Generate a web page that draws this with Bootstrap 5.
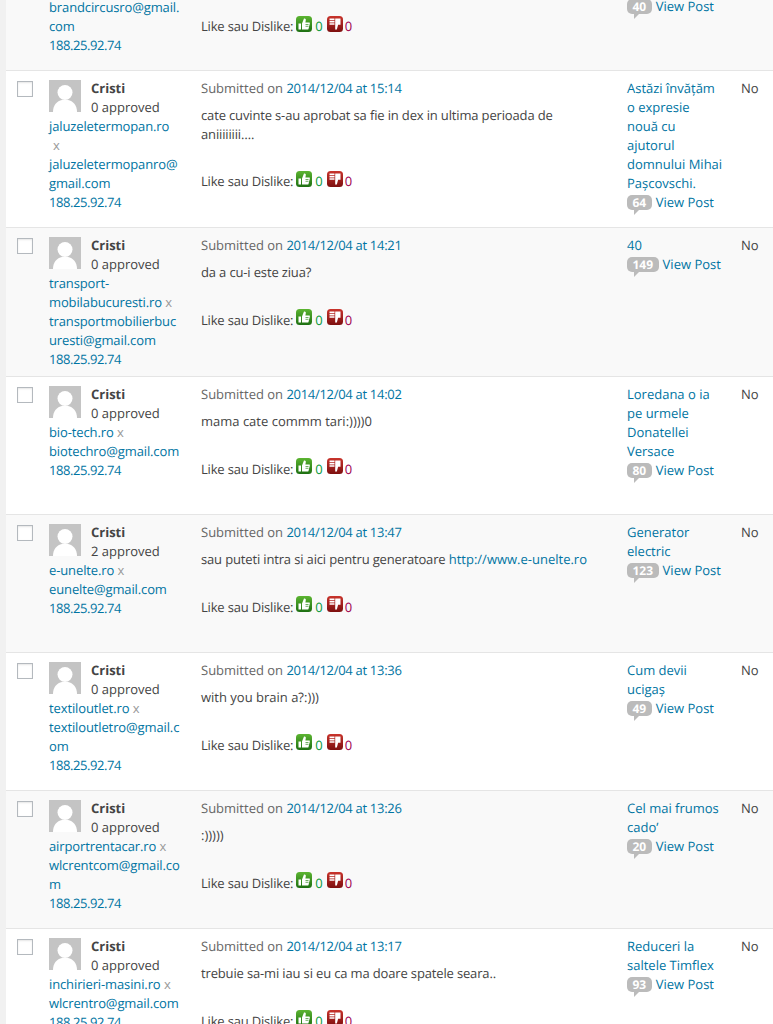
<!doctype html>
<html lang="ro"><head><meta charset="utf-8">
<link href="https://cdn.jsdelivr.net/npm/bootstrap@5.3.0/dist/css/bootstrap.min.css" rel="stylesheet">
<style>
html,body{margin:0;background:#f1f1f1;height:1024px;overflow:hidden}
body{font-family:"Open Sans","Noto Sans",sans-serif;font-size:13px;line-height:19px;color:#444;text-rendering:geometricPrecision}
a{color:#0074a2;text-decoration:none}
.wrapc{margin-left:6px;background:#fff}
.crow{border-bottom:1px solid #e5e5e5;background:#fff;min-height:138px}
.crow.alt{background:#f9f9f9}
.crow-cut{min-height:0;height:71px;overflow:hidden}
.cchk{width:43px;flex:none;padding:10px 0 0 11px}
.cbox{display:block;width:16px;height:16px;border:1px solid #b4b9be;background:#fff;box-shadow:inset 0 1px 2px rgba(0,0,0,.1)}
.cauth{width:152px;flex:none;padding:8px 10px 7px 0}
.cauth>a{letter-spacing:-.12px}
.cauth>a.cip{letter-spacing:-.43px}
.crow-cut .cauth{padding-top:0;margin-top:-2px}
.ahead{display:flex;height:38px}
.avat{width:32px;height:32px;flex:none;margin:1px 10px 0 0;display:block}
.aname{font-weight:700;display:block}
.ax{color:#999}
.ax-own{margin-left:4px}
.cbody{width:426px;flex:none;padding:8px 10px 0 0}
.crow-cut .cbody{padding-top:17px}
.csub{color:#666;margin-bottom:8px}
.csub a{letter-spacing:-.3px}
.ctext{margin:0;line-height:18.5px}
.ctext-tight{letter-spacing:-.15px}
.ctext-tight a{letter-spacing:0}
.clike{margin-top:29px;display:flex;align-items:center;height:19px}
.clabel{letter-spacing:-.18px}
.crow-cut .clike{margin-top:0}
.ticon{display:block;width:16px;height:16px;margin:0 3px;position:relative;top:-3px}
.ticon-down{margin-left:4px;margin-right:2px}
.cg{color:#0a9a3c}.cr{color:#a00050}
.cpost{width:114px;flex:none;padding:8px 0 15px}
.crow-cut .cpost{padding:0;margin-top:-3px}
.cno{flex:1;padding:8px 0 0}
.bub{display:inline-block;position:relative;background:#bbb;color:#fff;font-weight:700;font-size:12px;line-height:15px;height:15px;padding:0 5.5px;border-radius:5px;margin:2px 4px 0 0}
.bub::after{content:"";position:absolute;left:7px;top:15px;border-style:solid;border-width:5px 5px 0 0;border-color:#bbb transparent transparent transparent}
</style></head><body>
<svg width="0" height="0" class="position-absolute"><defs>
<linearGradient id="gg" x1="0" y1="0" x2="0" y2="1"><stop offset="0" stop-color="#5cb531"/><stop offset="1" stop-color="#1d6f12"/></linearGradient>
<linearGradient id="rg" x1="0" y1="0" x2="0" y2="1"><stop offset="0" stop-color="#c9342c"/><stop offset="1" stop-color="#7d0f0f"/></linearGradient>
<symbol id="up" viewBox="0 0 16 16"><rect width="16" height="16" rx="3.5" fill="url(#gg)"/><path d="M2.500 7.500h2.500v6H2.500zM6 7.500 8 2.500c1.300-.4 2 .5 1.800 1.700L9.400 6.500H13c.8 0 1 .6.800 1.200l-1.300 5.300c-.1.400-.4.600-.9.600H6z" fill="#fff"/><path d="M9.500 8.500h3M9.500 10.300h3" stroke="#2f8a1c" stroke-width=".7"/></symbol>
<symbol id="down" viewBox="0 0 16 16"><rect width="16" height="16" rx="3.500" fill="url(#rg)"/><path d="M2.500 2.500h5v1.800h-5zM2.500 5h5v1.600h-5zM2.500 7.300h5v1.500h-5zM8.200 2.500h5.300v6.300h-2.400l-1.100 4.200c-.3.800-1 1-1.600.6-.3-.8-.3-1.600-.2-2.500l0-2.300z" fill="#fff"/></symbol>
<symbol id="av" viewBox="0 0 32 32"><rect width="32" height="32" fill="#c4c4c4"/><circle cx="16" cy="12.500" r="7.500" fill="#fff"/><path d="M4 32c0-7 4-11 9-12h6c5 1 9 5 9 12z" fill="#fff"/></symbol>
</defs></svg>
<div class="wrapc">

<div class="crow crow-cut alt d-flex">
<div class="cchk"></div>
<div class="cauth"><a href="#">brandcircusro@gmail.<br>com</a><br><a class="cip" href="#">188.25.92.74</a></div>
<div class="cbody"><div class="clike"><span class="clabel">Like sau Dislike:</span><svg class="ticon"><use href="#up"/></svg><span class="cg">0</span><svg class="ticon ticon-down"><use href="#down"/></svg><span class="cr">0</span></div></div>
<div class="cpost"><div class="d-flex"><span class="bub">40</span><a href="#">View Post</a></div></div>
</div>

<div class="crow d-flex">
<div class="cchk"><span class="cbox"></span></div>
<div class="cauth"><div class="ahead"><svg class="avat"><use href="#av"/></svg><div><span class="aname">Cristi</span>0 approved</div></div><a href="#">jaluzeletermopan.ro</a><br><span class="ax ax-own">x</span><br><a href="#">jaluzeletermopanro@<br>gmail.com</a><br><a class="cip" href="#">188.25.92.74</a></div>
<div class="cbody"><div class="csub">Submitted on <a href="#">2014/12/04 at 15:14</a></div><p class="ctext ctext-tight">cate cuvinte s-au aprobat sa fie in dex in ultima perioada de<br>aniiiiiiii….</p><div class="clike"><span class="clabel">Like sau Dislike:</span><svg class="ticon"><use href="#up"/></svg><span class="cg">0</span><svg class="ticon ticon-down"><use href="#down"/></svg><span class="cr">0</span></div></div>
<div class="cpost"><a href="#">Astăzi învățăm<br>o expresie<br>nouă cu<br>ajutorul<br>domnului Mihai<br>Pașcovschi.</a><div class="d-flex"><span class="bub">64</span><a href="#">View Post</a></div></div>
<div class="cno">No</div>
</div>

<div class="crow alt d-flex">
<div class="cchk"><span class="cbox"></span></div>
<div class="cauth"><div class="ahead"><svg class="avat"><use href="#av"/></svg><div><span class="aname">Cristi</span>0 approved</div></div><a href="#">transport-<br>mobilabucuresti.ro</a> <span class="ax">x</span><br><a href="#">transportmobilierbuc<br>uresti@gmail.com</a><br><a class="cip" href="#">188.25.92.74</a></div>
<div class="cbody"><div class="csub">Submitted on <a href="#">2014/12/04 at 14:21</a></div><p class="ctext ctext-tight">da a cu-i este ziua?</p><div class="clike"><span class="clabel">Like sau Dislike:</span><svg class="ticon"><use href="#up"/></svg><span class="cg">0</span><svg class="ticon ticon-down"><use href="#down"/></svg><span class="cr">0</span></div></div>
<div class="cpost"><a href="#">40</a><div class="d-flex"><span class="bub">149</span><a href="#">View Post</a></div></div>
<div class="cno">No</div>
</div>

<div class="crow d-flex">
<div class="cchk"><span class="cbox"></span></div>
<div class="cauth"><div class="ahead"><svg class="avat"><use href="#av"/></svg><div><span class="aname">Cristi</span>0 approved</div></div><a href="#">bio-tech.ro</a> <span class="ax">x</span><br><a href="#">biotechro@gmail.com</a><br><a class="cip" href="#">188.25.92.74</a></div>
<div class="cbody"><div class="csub">Submitted on <a href="#">2014/12/04 at 14:02</a></div><p class="ctext">mama cate commm tari:))))0</p><div class="clike"><span class="clabel">Like sau Dislike:</span><svg class="ticon"><use href="#up"/></svg><span class="cg">0</span><svg class="ticon ticon-down"><use href="#down"/></svg><span class="cr">0</span></div></div>
<div class="cpost"><a href="#">Loredana o ia<br>pe urmele<br>Donatellei<br>Versace</a><div class="d-flex"><span class="bub">80</span><a href="#">View Post</a></div></div>
<div class="cno">No</div>
</div>

<div class="crow alt d-flex">
<div class="cchk"><span class="cbox"></span></div>
<div class="cauth"><div class="ahead"><svg class="avat"><use href="#av"/></svg><div><span class="aname">Cristi</span>2 approved</div></div><a href="#">e-unelte.ro</a> <span class="ax">x</span><br><a href="#">eunelte@gmail.com</a><br><a class="cip" href="#">188.25.92.74</a></div>
<div class="cbody"><div class="csub">Submitted on <a href="#">2014/12/04 at 13:47</a></div><p class="ctext ctext-tight">sau puteti intra si aici pentru generatoare <a href="#">http://www.e-unelte.ro</a></p><div class="clike"><span class="clabel">Like sau Dislike:</span><svg class="ticon"><use href="#up"/></svg><span class="cg">0</span><svg class="ticon ticon-down"><use href="#down"/></svg><span class="cr">0</span></div></div>
<div class="cpost"><a href="#">Generator<br>electric</a><div class="d-flex"><span class="bub">123</span><a href="#">View Post</a></div></div>
<div class="cno">No</div>
</div>

<div class="crow d-flex">
<div class="cchk"><span class="cbox"></span></div>
<div class="cauth"><div class="ahead"><svg class="avat"><use href="#av"/></svg><div><span class="aname">Cristi</span>0 approved</div></div><a href="#">textiloutlet.ro</a> <span class="ax">x</span><br><a href="#">textiloutletro@gmail.c<br>om</a><br><a class="cip" href="#">188.25.92.74</a></div>
<div class="cbody"><div class="csub">Submitted on <a href="#">2014/12/04 at 13:36</a></div><p class="ctext">with you brain a?:)))</p><div class="clike"><span class="clabel">Like sau Dislike:</span><svg class="ticon"><use href="#up"/></svg><span class="cg">0</span><svg class="ticon ticon-down"><use href="#down"/></svg><span class="cr">0</span></div></div>
<div class="cpost"><a href="#">Cum devii<br>ucigaș</a><div class="d-flex"><span class="bub">49</span><a href="#">View Post</a></div></div>
<div class="cno">No</div>
</div>

<div class="crow alt d-flex">
<div class="cchk"><span class="cbox"></span></div>
<div class="cauth"><div class="ahead"><svg class="avat"><use href="#av"/></svg><div><span class="aname">Cristi</span>0 approved</div></div><a href="#">airportrentacar.ro</a> <span class="ax">x</span><br><a href="#">wlcrentcom@gmail.co<br>m</a><br><a class="cip" href="#">188.25.92.74</a></div>
<div class="cbody"><div class="csub">Submitted on <a href="#">2014/12/04 at 13:26</a></div><p class="ctext">:)))))</p><div class="clike"><span class="clabel">Like sau Dislike:</span><svg class="ticon"><use href="#up"/></svg><span class="cg">0</span><svg class="ticon ticon-down"><use href="#down"/></svg><span class="cr">0</span></div></div>
<div class="cpost"><a href="#">Cel mai frumos<br>cado’</a><div class="d-flex"><span class="bub">20</span><a href="#">View Post</a></div></div>
<div class="cno">No</div>
</div>

<div class="crow d-flex">
<div class="cchk"><span class="cbox"></span></div>
<div class="cauth"><div class="ahead"><svg class="avat"><use href="#av"/></svg><div><span class="aname">Cristi</span>0 approved</div></div><a href="#">inchirieri-masini.ro</a> <span class="ax">x</span><br><a href="#">wlcrentro@gmail.com</a><br><a class="cip" href="#">188.25.92.74</a></div>
<div class="cbody"><div class="csub">Submitted on <a href="#">2014/12/04 at 13:17</a></div><p class="ctext ctext-tight">trebuie sa-mi iau si eu ca ma doare spatele seara..</p><div class="clike"><span class="clabel">Like sau Dislike:</span><svg class="ticon"><use href="#up"/></svg><span class="cg">0</span><svg class="ticon ticon-down"><use href="#down"/></svg><span class="cr">0</span></div></div>
<div class="cpost"><a href="#">Reduceri la<br>saltele Timflex</a><div class="d-flex"><span class="bub">93</span><a href="#">View Post</a></div></div>
<div class="cno">No</div>
</div>

</div>
<script src="https://cdn.jsdelivr.net/npm/bootstrap@5.3.0/dist/js/bootstrap.bundle.min.js"></script>
</body></html>
